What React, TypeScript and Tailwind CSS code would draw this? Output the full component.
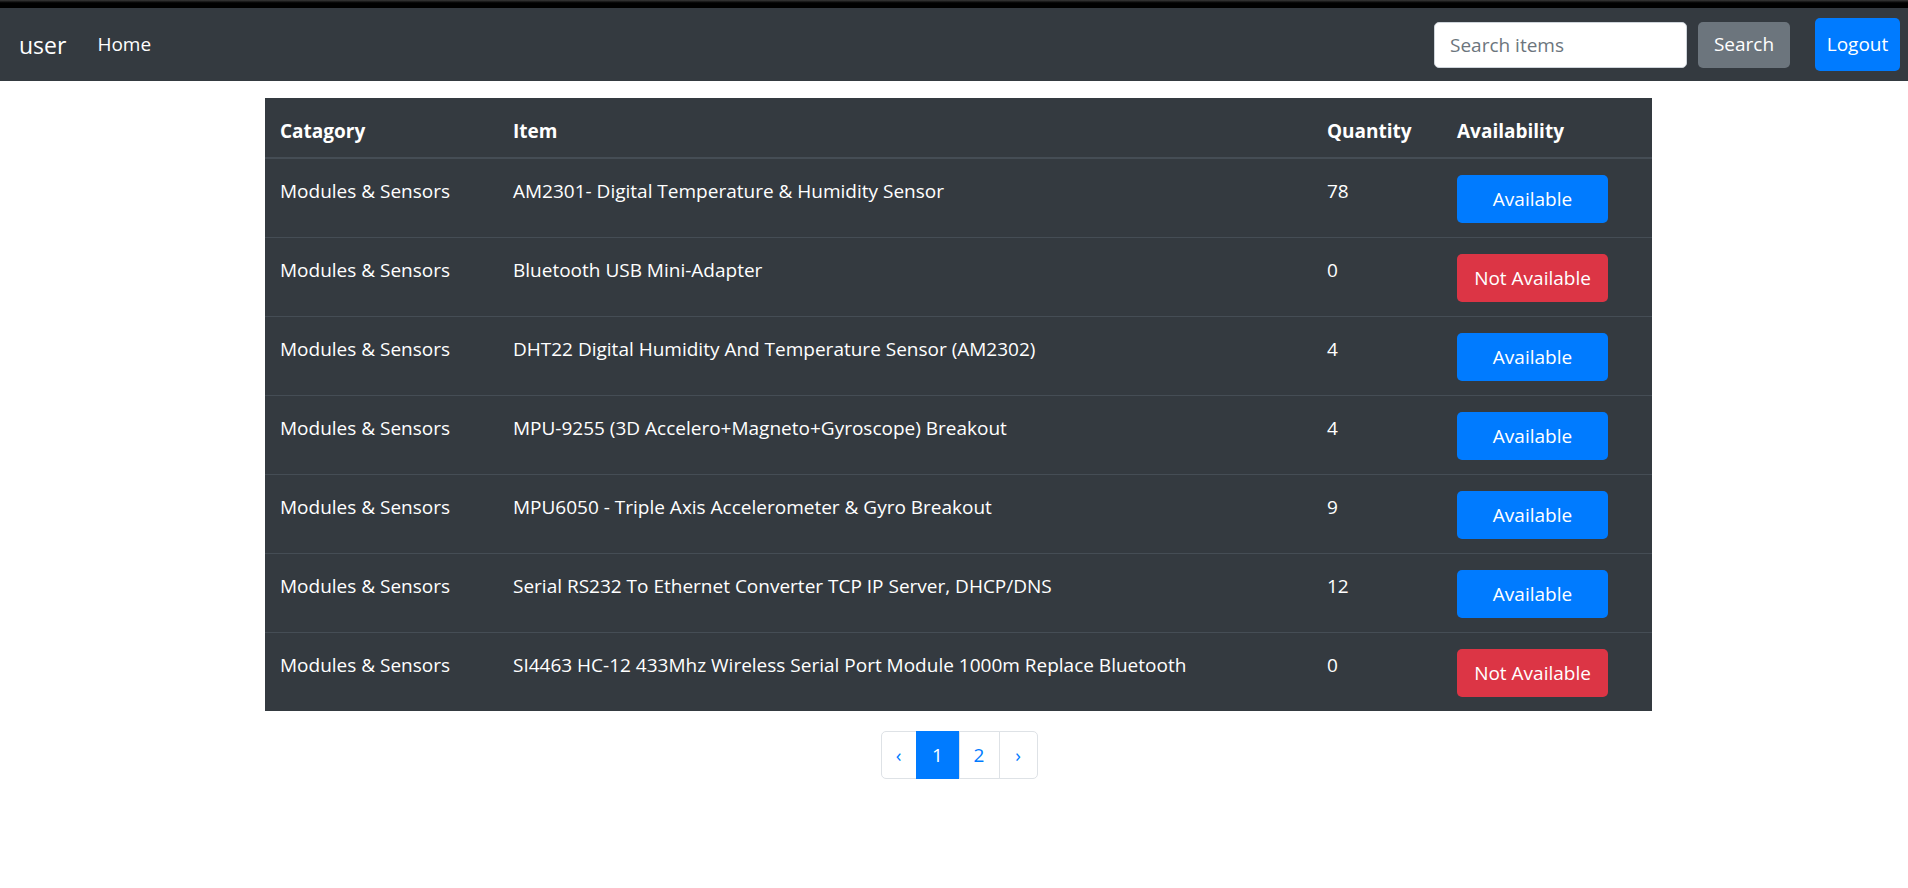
import { useState } from 'react';

type Item = { category: string; name: string; qty: number };

const ITEMS: Item[] = [
  { category: 'Modules & Sensors', name: 'AM2301- Digital Temperature & Humidity Sensor', qty: 78 },
  { category: 'Modules & Sensors', name: 'Bluetooth USB Mini-Adapter', qty: 0 },
  { category: 'Modules & Sensors', name: 'DHT22 Digital Humidity And Temperature Sensor (AM2302)', qty: 4 },
  { category: 'Modules & Sensors', name: 'MPU-9255 (3D Accelero+Magneto+Gyroscope) Breakout', qty: 4 },
  { category: 'Modules & Sensors', name: 'MPU6050 - Triple Axis Accelerometer & Gyro Breakout', qty: 9 },
  { category: 'Modules & Sensors', name: 'Serial RS232 To Ethernet Converter TCP IP Server, DHCP/DNS', qty: 12 },
  { category: 'Modules & Sensors', name: 'SI4463 HC-12 433Mhz Wireless Serial Port Module 1000m Replace Bluetooth', qty: 0 },
];

export default function App() {
  const [query, setQuery] = useState('');
  const [page, setPage] = useState(1);

  return (
    <div className="min-h-[888px] bg-white text-[19px] text-[#212529]" style={{ fontFamily: '"Open Sans", "Noto Sans", sans-serif' }}>
      {/* browser chrome leftover */}
      <div className="h-[8px] bg-black bg-gradient-to-b from-[#3a3a3a] via-black to-black" />

      <nav className="h-[73px] bg-[#343a40] flex items-center pl-[19px] pr-[8px]">
        <span className="text-[23px] text-white mr-[31px] leading-none pt-[2px]">user</span>
        <a className="text-[19px] text-white leading-none">Home</a>
        <div className="ml-auto flex items-center">
          <input
            value={query}
            onChange={e => setQuery(e.target.value)}
            placeholder="Search items"
            className="w-[253px] h-[46px] rounded-[5px] bg-white border border-[#ced4da] px-[15px] text-[19px] text-[#495057] placeholder:text-[#6c757d] outline-none"
          />
          <button className="ml-[11px] w-[92px] h-[46px] rounded-[5px] bg-[#6c757d] text-white text-[19px]">Search</button>
          <button className="ml-[25px] w-[85px] h-[53px] rounded-[5px] bg-[#007bff] text-white text-[19px]">Logout</button>
        </div>
      </nav>

      <div className="mx-auto w-[1398px] pl-[10px] pt-[17px]">
        <table className="w-[1387px] bg-[#343a40] text-white border-collapse table-fixed">
          <colgroup>
            <col className="w-[233px]" />
            <col className="w-[814px]" />
            <col className="w-[130px]" />
            <col />
          </colgroup>
          <thead>
            <tr className="border-b-2 border-[#454d55] text-left font-bold">
              <th className="px-[15px] pt-[19px] pb-[11px] leading-[29px]">Catagory</th>
              <th className="px-[15px] pt-[19px] pb-[11px] leading-[29px]">Item</th>
              <th className="px-[15px] pt-[19px] pb-[11px] leading-[29px]">Quantity</th>
              <th className="px-[15px] pt-[19px] pb-[11px] leading-[29px]">Availability</th>
            </tr>
          </thead>
          <tbody>
            {ITEMS.map((it, i) => (
              <tr key={i} className={i > 0 ? 'border-t border-[#454d55]' : ''}>
                <td className="align-top px-[15px] pt-[18px] leading-[29px]">{it.category}</td>
                <td className="align-top px-[15px] pt-[18px] leading-[29px] whitespace-nowrap">{it.name}</td>
                <td className="align-top px-[15px] pt-[18px] leading-[29px]">{it.qty}</td>
                <td className="align-top px-[15px] pt-[16px] pb-[14px]">
                  {it.qty > 0 ? (
                    <button className="w-[151px] h-[48px] rounded-[5px] bg-[#007bff] text-white text-[19px]">Available</button>
                  ) : (
                    <button className="w-[151px] h-[48px] rounded-[5px] bg-[#dc3545] text-white text-[19px]">Not Available</button>
                  )}
                </td>
              </tr>
            ))}
          </tbody>
        </table>

        <div className="flex justify-center mt-[20px]">
          <ul className="flex h-[48px] text-[19px]">
            <li>
              <a className="flex items-center justify-center w-[36px] h-full border border-[#dee2e6] rounded-l-[5px] text-[#007bff] bg-white">‹</a>
            </li>
            {[1, 2].map(n => (
              <li key={n}>
                <a
                  onClick={() => setPage(n)}
                  className={
                    n === page
                      ? 'flex items-center justify-center w-[44px] h-full bg-[#007bff] border border-[#007bff] text-white -ml-px'
                      : 'flex items-center justify-center w-[41px] h-full bg-white border border-[#dee2e6] text-[#007bff] -ml-px'
                  }
                >
                  {n}
                </a>
              </li>
            ))}
            <li>
              <a className="flex items-center justify-center w-[39px] h-full border border-[#dee2e6] rounded-r-[5px] text-[#007bff] bg-white -ml-px">›</a>
            </li>
          </ul>
        </div>
      </div>
    </div>
  );
}
